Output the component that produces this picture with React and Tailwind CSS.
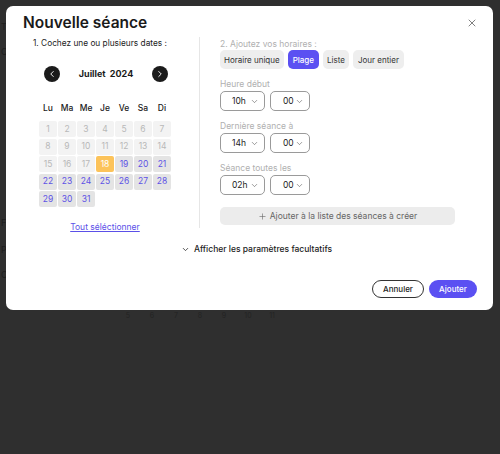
import React from "react";
import { X, ChevronLeft, ChevronRight, ChevronDown, Plus } from "lucide-react";

const FONT = { fontFamily: "Inter, 'Noto Sans', sans-serif" };

function Select({ value, w, pl }) {
  return (
    <div
      className={`flex h-[20px] items-center justify-between rounded-[5px] border border-[#9a9a9a] pr-[5px] text-[8.5px] text-[#222] ${w} ${pl}`}
    >
      <span>{value}</span>
      <ChevronDown size={9} strokeWidth={1.4} className="text-[#444]" />
    </div>
  );
}

function TimeRow({ label, h }) {
  return (
    <>
      <div className="mt-[10px] h-[10px] text-[8.5px] leading-[10px] text-[#b0b0b0]">{label}</div>
      <div className="mt-[2px] flex gap-[5px]">
        <Select value={h} w="w-[45px]" pl="pl-[11px]" />
        <Select value="00" w="w-[40px]" pl="pl-[12px]" />
      </div>
    </>
  );
}

export default function App() {
  const days = Array.from({ length: 31 }, (_, i) => i + 1);
  return (
    <div className="relative h-[454px] w-[500px] overflow-hidden bg-[#2f2f2f]" style={FONT}>
      {/* faint underlying page */}
      <div className="absolute left-[1px] top-[20px] text-[9px] text-[#1e1e1e]">T</div>
      <div className="absolute left-[1px] top-[45px] text-[9px] text-[#1e1e1e]">C</div>
      <div className="absolute left-[1px] top-[216px] text-[9px] text-[#1e1e1e]">F</div>
      <div className="absolute left-[1px] top-[243px] text-[9px] text-[#1e1e1e]">P</div>
      <div className="absolute left-[1px] top-[268px] text-[9px] text-[#1e1e1e]">C</div>
      <div className="absolute left-[124px] top-[311px] flex gap-[16px] text-[7px] text-[#232323]">
        {["5", "6", "7", "8", "9", "10", "11"].map((d) => (
          <span key={d} className="w-[8px] text-center">{d}</span>
        ))}
      </div>

      {/* modal */}
      <div className="absolute left-[6px] top-[6px] h-[304px] w-[487px] rounded-[7px] bg-white">
        <div className="mt-[9px] flex h-[16px] items-center justify-between pl-[17px] pr-[15px]">
          <span className="text-[15.5px] font-semibold leading-[16px] text-[#1a1a1a]">Nouvelle séance</span>
          <X size={12} strokeWidth={1.5} className="text-[#555]" />
        </div>

        <div className="mt-[6px] flex">
          {/* left column */}
          <div className="w-[193px]">
            <div className="ml-[27px] mt-[1px] h-[10px] text-[8.3px] leading-[10px] text-[#222]">
              1. Cochez une ou plusieurs dates :
            </div>
            <div className="ml-[38px] mt-[18px] flex h-[16px] w-[124px] items-center justify-between">
              <div className="flex h-[16px] w-[16px] items-center justify-center rounded-full bg-[#1b1b1b]">
                <ChevronLeft size={10} strokeWidth={2.2} className="text-white" />
              </div>
              <span className="text-[9px] font-bold text-[#1a1a1a]">Juillet&nbsp;&nbsp;2024</span>
              <div className="flex h-[16px] w-[16px] items-center justify-center rounded-full bg-[#1b1b1b]">
                <ChevronRight size={10} strokeWidth={2.2} className="text-white" />
              </div>
            </div>
            <div className="ml-[33px] mt-[21px] grid h-[10px] w-[132px] grid-cols-7 gap-x-[1px] text-center text-[8.5px] font-medium leading-[10px] text-[#1a1a1a]">
              {["Lu", "Ma", "Me", "Je", "Ve", "Sa", "Di"].map((d) => (
                <span key={d}>{d}</span>
              ))}
            </div>
            <div className="ml-[33px] mt-[8px] grid w-[132px] grid-cols-7 gap-x-[1px] gap-y-[1.5px]">
              {days.map((d) => {
                let cls = "bg-[#f3f3f3] text-[#b8b8b8]";
                if (d === 18) cls = "bg-[#fcc35a] text-white";
                else if (d > 18) cls = "bg-[#e4e4e4] text-[#5d52e6]";
                return (
                  <div
                    key={d}
                    className={`flex h-[16px] items-center justify-center rounded-[2px] text-[8.5px] ${cls}`}
                  >
                    {d}
                  </div>
                );
              })}
            </div>
            <div className="ml-[33px] mt-[15px] w-[132px] text-center text-[8.5px] leading-[10px] text-[#5b50e8] underline">
              Tout séléctionner
            </div>
          </div>

          {/* divider */}
          <div className="h-[191px] w-[1px] bg-[#e6e6e6]" />

          {/* right column */}
          <div className="pl-[20px]">
            <div className="mt-[2px] h-[10px] text-[8.5px] leading-[10px] text-[#b0b0b0]">2. Ajoutez vos horaires :</div>
            <div className="mt-[1px] flex h-[19px] gap-[4px] text-[8px]">
              <div className="flex items-center rounded-[5px] bg-[#eeeeee] px-[4px] text-[#333]">Horaire unique</div>
              <div className="flex items-center rounded-[5px] bg-[#5b50f2] px-[5px] font-medium text-white">Plage</div>
              <div className="flex items-center rounded-[5px] bg-[#eeeeee] px-[4px] text-[#333]">Liste</div>
              <div className="flex items-center rounded-[5px] bg-[#eeeeee] px-[5px] text-[#333]">Jour entier</div>
            </div>
            <div className="mt-[2px]" />
            <TimeRow label="Heure début" h="10h" />
            <TimeRow label="Dernière séance à" h="14h" />
            <TimeRow label="Séance toutes les" h="02h" />
            <div className="mt-[12px] flex h-[18px] w-[235px] items-center justify-center gap-[3px] rounded-[5px] bg-[#ececec] text-[8.5px] text-[#666]">
              <Plus size={9} strokeWidth={1.6} />
              <span>Ajouter à la liste des séances à créer</span>
            </div>
          </div>
        </div>

        <div className="mt-[12px] flex h-[10px] items-center justify-center gap-[4px] pl-[14px] text-[8.5px] font-medium text-[#222]">
          <ChevronDown size={9} strokeWidth={2} />
          <span>Afficher les paramètres facultatifs</span>
        </div>

        <div className="mt-[26px] flex justify-end gap-[5px] pr-[16px]">
          <div className="flex h-[18px] w-[52px] items-center justify-center rounded-full border border-[#333] text-[8px] font-medium text-[#222]">
            Annuler
          </div>
          <div className="flex h-[18px] w-[48px] items-center justify-center rounded-full bg-[#5b50f2] text-[8px] font-medium text-white">
            Ajouter
          </div>
        </div>
      </div>
    </div>
  );
}
